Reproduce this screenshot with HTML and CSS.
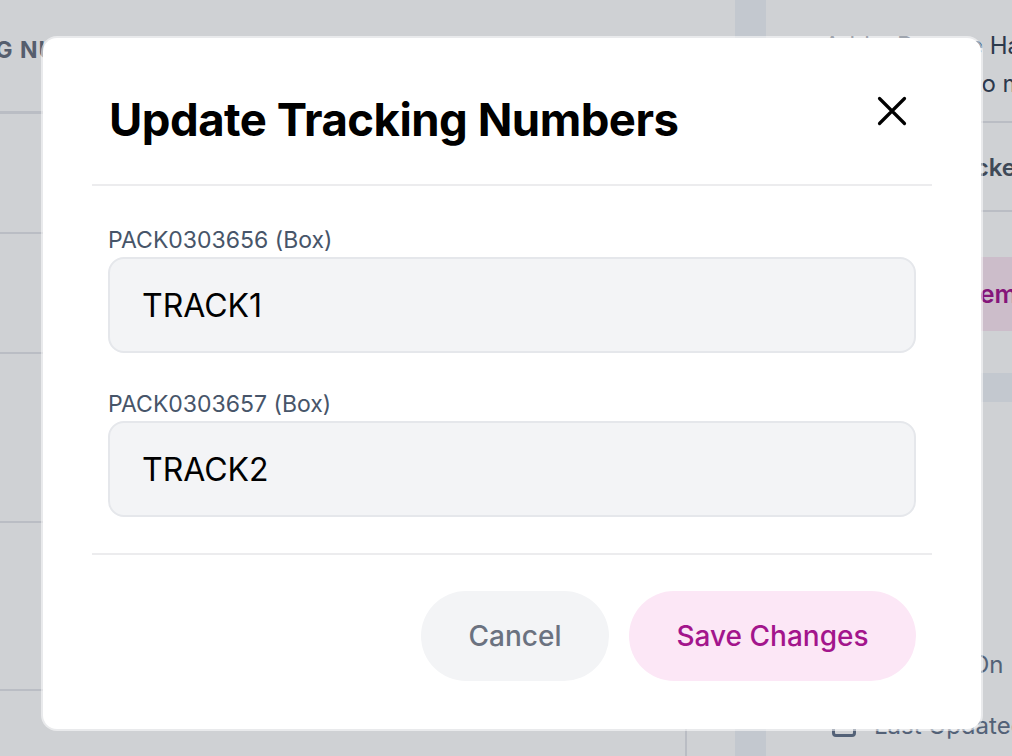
FILE: index.html
```html
<!DOCTYPE html>
<html lang="en">
<head>
<meta charset="utf-8">
<title>Update Tracking Numbers</title>
<link rel="stylesheet" href="styles.css">
</head>
<body>
<div class="page">
  <main class="main">
    <div class="table">
      <div class="thead"><span class="th">Tracking Number</span></div>
      <div class="row r1"></div>
      <div class="row r2"></div>
      <div class="row r3"></div>
      <div class="row r4"></div>
      <div class="row r5"><span class="vline"></span></div>
    </div>
  </main>
  <div class="gutter"><div class="gband"></div></div>
  <aside class="side">
    <div class="side-intro">Add a Remote Hardware<br>Connect this to manage</div>
    <div class="side-row bold">Print Box Stickers</div>
    <div class="side-btn-wrap"><span class="side-btn">Remove All Items</span></div>
    <div class="side-band"></div>
    <div class="side-spacer"></div>
    <div class="side-check"><span class="cb"></span>Created On</div>
    <div class="side-check"><span class="cb"></span>Last Updated</div>
  </aside>
</div>
<div class="overlay"></div>
<div class="modal" role="dialog" aria-labelledby="mtitle">
  <div class="modal-head">
    <h1 id="mtitle" class="modal-title">Update Tracking Numbers</h1>
    <button class="close" aria-label="Close">
      <svg width="30" height="30" viewBox="0 0 30 30"><path d="M2.5 2.5 L27.5 27.5 M27.5 2.5 L2.5 27.5" stroke="#000" stroke-width="3.2" stroke-linecap="round" fill="none"/></svg>
    </button>
  </div>
  <div class="modal-body">
    <label class="field">
      <span class="field-label">PACK0303656 (Box)</span>
      <span class="field-input">TRACK1</span>
    </label>
    <label class="field">
      <span class="field-label">PACK0303657 (Box)</span>
      <span class="field-input">TRACK2</span>
    </label>
  </div>
  <div class="modal-foot">
    <button class="btn btn-cancel">Cancel</button>
    <button class="btn btn-save">Save Changes</button>
  </div>
</div>
</body>
</html>
```
FILE: styles.css
```css
* { box-sizing: border-box; }
html, body { margin: 0; padding: 0; }
body {
  width: 1012px;
  height: 756px;
  overflow: hidden;
  font-family: Inter, "Noto Sans", "Liberation Sans", sans-serif;
  background: #fff;
  position: relative;
}
.page {
  display: flex;
  height: 756px;
}
.main {
  width: 735px;
  flex: none;
  overflow: hidden;
}
.table {
  margin-left: -116px;
}
.thead {
  height: 114px;
  border-bottom: 3px solid #e5e7eb;
  padding-top: 36px;
  white-space: nowrap;
}
.th {
  font-size: 23px;
  font-weight: 700;
  letter-spacing: 1px;
  text-transform: uppercase;
  color: #68707f;
}
.row { border-bottom: 2px solid #e5e7eb; }
.r1 { height: 120px; }
.r2 { height: 120px; }
.r3 { height: 169px; }
.r4 { height: 168px; }
.r5 { height: 80px; border-bottom: 0; position: relative; }
.vline {
  position: absolute;
  left: 801px;
  top: 30px;
  bottom: 0;
  width: 2px;
  background: #e5e7eb;
}
.gutter {
  width: 31px;
  flex: none;
  background: #f1f4f9;
  padding-top: 377px;
}
.gband { height: 30px; background: #f1f4f9; }
.side {
  flex: 1;
  display: flex;
  flex-direction: column;
  color: #334155;
  white-space: nowrap;
  overflow: hidden;
}
.side-intro {
  padding: 27px 0 0 58px;
  font-size: 24px;
  line-height: 38px;
  height: 124px;
  border-bottom: 2px solid #e5e7eb;
}
.side-row {
  height: 90px;
  border-bottom: 2px solid #e5e7eb;
  padding: 30px 0 0 68px;
  font-size: 24px;
  color: #4b5563;
}
.bold { font-weight: 600; }
.side-btn-wrap { padding: 45px 0 0 30px; height: 162px; }
.side-btn {
  display: inline-block;
  background: #fce7f3;
  color: #a3158f;
  font-size: 25px;
  font-weight: 600;
  height: 74px;
  line-height: 74px;
  padding: 0 30px 0 27px;
}
.side-band { height: 30px; background: #f1f4f9; margin-left: -31px; }
.side-spacer { height: 234px; }
.side-check {
  display: flex;
  align-items: center;
  gap: 18px;
  padding-left: 66px;
  font-size: 24px;
  color: #64748b;
  height: 62px;
}
.cb {
  width: 24px;
  height: 24px;
  border: 3px solid #64748b;
  border-radius: 4px;
  flex: none;
}
.overlay {
  position: absolute;
  inset: 0;
  background: rgba(17, 24, 39, 0.2);
}
.modal {
  position: absolute;
  left: 43px;
  top: 38px;
  width: 938px;
  height: 691px;
  background: #fff;
  border-radius: 14px;
  box-shadow: 0 0 0 2px rgba(255, 255, 255, 0.55);
  padding: 0 49px;
  display: flex;
  flex-direction: column;
}
.modal-head {
  display: flex;
  align-items: center;
  justify-content: space-between;
  padding: 52px 0 34px 17px;
  border-bottom: 2px solid #ececee;
}
.modal-title {
  margin: 0;
  font-size: 45.5px;
  line-height: 60px;
  font-weight: 700;
  color: #000;
  letter-spacing: -0.5px;
}
.close {
  border: 0;
  background: none;
  padding: 0;
  width: 30px;
  height: 30px;
  margin-right: 25px;
  margin-top: -18px;
  display: flex;
}
.modal-body {
  padding: 41px 16px 36px 16px;
  border-bottom: 2px solid #ececee;
  display: flex;
  flex-direction: column;
  gap: 38px;
}
.field { display: flex; flex-direction: column; gap: 4px; }
.field-label {
  font-size: 23px;
  line-height: 26px;
  color: #475569;
}
.field-input {
  display: flex;
  align-items: center;
  height: 96px;
  padding: 0 32px;
  background: #f3f4f6;
  border: 2px solid #e5e7eb;
  border-radius: 16px;
  font-size: 32px;
  color: #000;
}
.modal-foot {
  display: flex;
  justify-content: flex-end;
  gap: 20px;
  padding: 36px 16px 0 0;
}
.btn {
  border: 0;
  height: 90px;
  border-radius: 45px;
  font-family: inherit;
  font-size: 28px;
  font-weight: 500;
  padding: 0;
}
.btn-cancel {
  width: 188px;
  background: #f3f4f6;
  color: #6b7280;
}
.btn-save {
  width: 287px;
  background: #fce7f6;
  color: #a3158c;
}
```
